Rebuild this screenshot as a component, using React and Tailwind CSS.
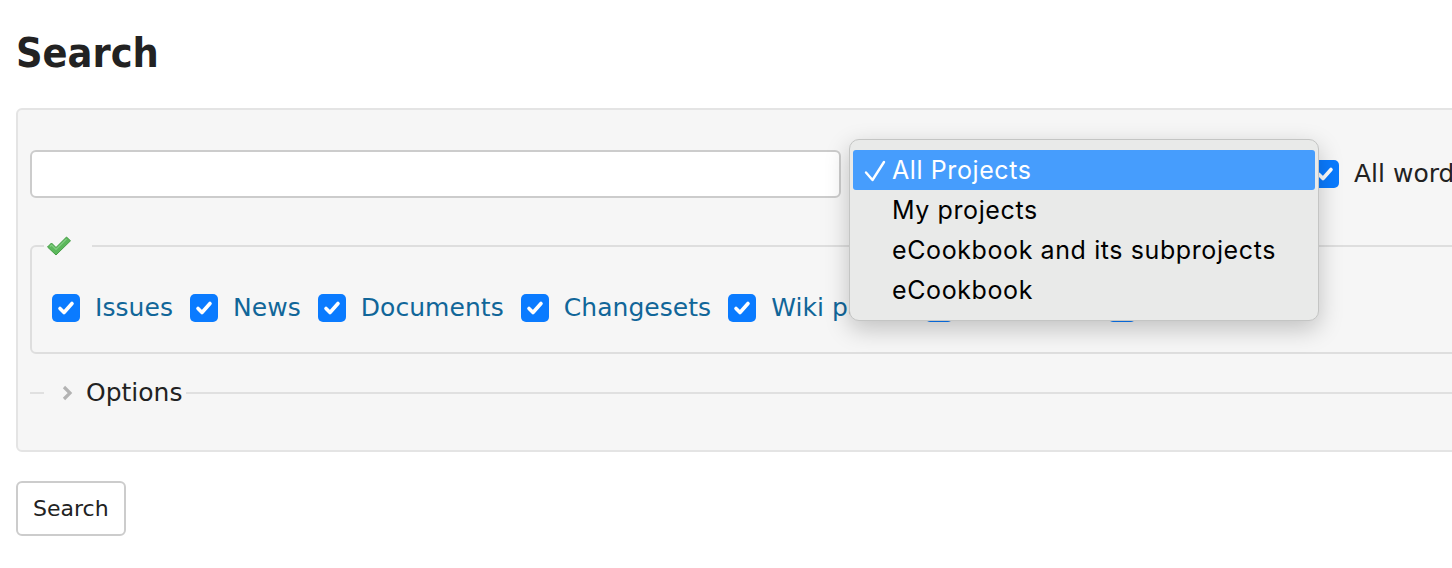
const TYPES = ['Issues', 'News', 'Documents', 'Changesets', 'Wiki pages', 'Messages', 'Projects']

const SCOPES = ['All Projects', 'My projects', 'eCookbook and its subprojects', 'eCookbook']

const body = { fontFamily: '"DejaVu Sans", Verdana, sans-serif' }
const system = { fontFamily: 'Inter, "Liberation Sans", Arial, sans-serif' }

function Check() {
  return (
    <span className="flex h-[28px] w-[28px] shrink-0 items-center justify-center rounded-[5px] bg-[#0a7bff]">
      <svg width="22" height="22" viewBox="0 0 22 22" fill="none">
        <path d="M5 11.5l4 4 8-9" stroke="#fff" strokeWidth="3.6" strokeLinecap="round" strokeLinejoin="round" />
      </svg>
    </span>
  )
}

function GreenTick() {
  return (
    <svg width="26" height="22" viewBox="0 0 26 22">
      <path d="M1.5 12l4-4 4.5 4.5L20.5 2l4 3.8L10 20z" fill="#5cb85c" stroke="#449d44" strokeWidth="1" strokeLinejoin="round" />
      <path d="M4 11.5l1.5-1.5 4.5 4.5L20.5 4" fill="none" stroke="#9ad99a" strokeWidth="1.2" opacity="0.6" />
    </svg>
  )
}

function ScopeMenu() {
  return (
    <div
      className="absolute left-[849px] top-[139px] w-[470px] rounded-[10px] border border-[#c4c5c4] bg-[#e9eae9] px-[3px] pt-[10px] pb-[10px] shadow-[0_8px_24px_rgba(0,0,0,0.22)]"
      style={system}
    >
      {SCOPES.map((s, i) => (
        <div
          key={s}
          className={
            'flex h-[40px] items-center pt-[2px] text-[25px] tracking-[0.6px] ' +
            (i === 0 ? 'rounded-[3px] bg-[#469dfd] text-white' : 'text-black')
          }
        >
          <span className="flex w-[39px] pl-[11px]">
            {i === 0 && (
              <svg width="22" height="24" viewBox="0 0 22 24" fill="none">
                <path d="M2 13.5l6.5 7.5L20 3" stroke="#fff" strokeWidth="2.4" strokeLinecap="round" strokeLinejoin="round" />
              </svg>
            )}
          </span>
          <span>{s}</span>
        </div>
      ))}
    </div>
  )
}

export default function App() {
  return (
    <div className="relative h-[568px] w-[1452px] overflow-hidden bg-white pl-[16px] pt-[33px] text-[#222]" style={body}>
      <h2 className="h-[41px] text-[41px] font-bold leading-none text-[#222]" style={{ fontFamily: '"DejaVu Sans Condensed", "DejaVu Sans", Verdana, sans-serif' }}>
        Search
      </h2>

      <div className="mt-[34px] w-[1600px] rounded-md border-2 border-[#e4e4e4] bg-[#f6f6f6] px-[12px] pt-[40px] pb-[43px]">
        <div className="flex items-center">
          <div className="h-[48px] w-[811px] rounded-[6px] border-2 border-[#cccccc] bg-white" />
          <div className="ml-[8px] h-[44px] w-[455px] rounded-[6px] border-2 border-[#cccccc] bg-white" />
          <div className="ml-[7px] flex items-center gap-[15px] text-[25px]">
            <Check />
            <span>All words</span>
          </div>
        </div>

        <fieldset className="mt-[37px] rounded-md border-2 border-[#dedede] px-[20px] pt-[37px] pb-[30px]">
          <legend className="ml-[-8px] h-[22px] w-[48px] pl-[2px]">
            <GreenTick />
          </legend>
          <div className="flex items-center text-[25px] leading-[28px] tracking-[0.05px] text-[#169]">
            {TYPES.map((t) => (
              <label key={t} className="mr-[17px] flex items-center gap-[15px]">
                <Check />
                <span>{t}</span>
              </label>
            ))}
          </div>
        </fieldset>

        <fieldset className="mt-[24px] border-t-2 border-[#e0e0e0]">
          <legend className="ml-[14px] flex h-[29px] items-center pr-[4px] pl-[17px] text-[25px] leading-[29px]">
            <svg width="12" height="18" viewBox="0 0 12 18" className="mr-[13px]">
              <path d="M3 3l6 6-6 6" fill="none" stroke="#b3b3b3" strokeWidth="3.2" />
            </svg>
            Options
          </legend>
        </fieldset>
      </div>

      <button className="mt-[29px] flex h-[55px] w-[110px] items-center rounded-md border-2 border-[#cccccc] bg-white pl-[15px] text-[22px] text-[#222]">
        Search
      </button>

      <ScopeMenu />
    </div>
  )
}
